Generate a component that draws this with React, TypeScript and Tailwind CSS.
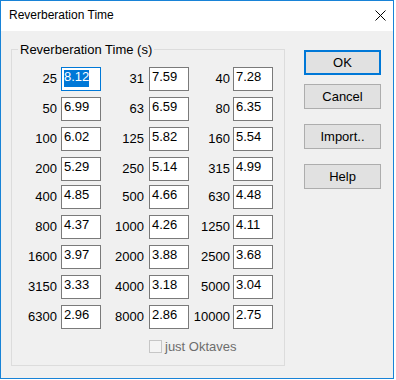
import React from 'react';

const rows: [string, string][][] = [
  [['25', '8.12'], ['31', '7.59'], ['40', '7.28']],
  [['50', '6.99'], ['63', '6.59'], ['80', '6.35']],
  [['100', '6.02'], ['125', '5.82'], ['160', '5.54']],
  [['200', '5.29'], ['250', '5.14'], ['315', '4.99']],
  [['400', '4.85'], ['500', '4.66'], ['630', '4.48']],
  [['800', '4.37'], ['1000', '4.26'], ['1250', '4.11']],
  [['1600', '3.97'], ['2000', '3.88'], ['2500', '3.68']],
  [['3150', '3.33'], ['4000', '3.18'], ['5000', '3.04']],
  [['6300', '2.96'], ['8000', '2.86'], ['10000', '2.75']],
];

// label widths and label->box gaps for the three columns
const cols = [
  { label: 'w-[45px]', gap: 'ml-[4px]' },
  { label: 'w-[43px]', gap: 'ml-[5px]' },
  { label: 'w-[41px]', gap: 'ml-[3px]' },
];

function ValueBox({ value, focused }: { value: string; focused?: boolean }) {
  return (
    <div
      className={`w-[40px] h-[24px] bg-white border flex items-start pt-[2px] pl-[2px] ${
        focused ? 'border-[#0078d7]' : 'border-[#7a7a7a]'
      }`}
    >
      <span
        className={`inline-block h-[17px] leading-[14px] ${
          focused ? 'bg-[#0078d7] text-white' : 'text-black'
        }`}
      >
        {value}
      </span>
    </div>
  );
}

function Button({ children, primary }: { children: React.ReactNode; primary?: boolean }) {
  return (
    <div
      className={`w-[77px] h-[25px] bg-[#e1e1e1] flex items-center justify-center leading-[15px] ${
        primary ? 'border-2 border-[#0078d7]' : 'border border-[#adadad]'
      }`}
    >
      {children}
    </div>
  );
}

export default function App() {
  return (
    <div
      className="w-[396px] h-[380px] bg-white text-[13px] text-black"
      style={{ fontFamily: '"Liberation Sans", Arial, sans-serif' }}
    >
      <div className="w-[394px] h-[379px] border border-[#1883d7] flex flex-col">
        {/* title bar */}
        <div className="h-[30px] bg-white flex items-start justify-between">
          <div className="pl-[8px] pt-[7px] text-[12px] leading-[15px]">Reverberation Time</div>
          <svg className="mt-[9px] mr-[7px]" width="11" height="11" viewBox="0 0 11 11">
            <path d="M0.5 0.5 L10.5 10.5 M10.5 0.5 L0.5 10.5" stroke="#000" strokeWidth="1" fill="none" />
          </svg>
        </div>

        {/* body */}
        <div className="flex-1 bg-[#f0f0f0] flex items-start pl-[10px]">
          <div className="relative mt-[18px] w-[274px] h-[317px] border border-[#dcdcdc]">
            <span className="absolute left-[6px] top-[-8px] px-[2px] bg-[#f0f0f0] leading-[15px]">
              Reverberation Time (s)
            </span>

            <div className="flex flex-col pt-[17px]">
              {rows.map((row, r) => (
                <div key={r} className={`flex items-start ${r === 0 ? '' : r === 4 ? 'mt-[4px]' : 'mt-[6px]'}`}>
                  {row.map(([freq, val], c) => (
                    <div key={freq} className="flex items-start">
                      <div className={`${cols[c].label} text-right pt-[4px] leading-[15px]`}>{freq}</div>
                      <div className={cols[c].gap}>
                        <ValueBox value={val} focused={r === 0 && c === 0} />
                      </div>
                    </div>
                  ))}
                </div>
              ))}

              <div className="flex items-start mt-[11px] pl-[137px]">
                <div className="w-[13px] h-[13px] border border-[#c6c6c6] bg-[#f4f4f4]" />
                <span className="ml-[3px] leading-[13px] text-[#6d6d6d]">just Oktaves</span>
              </div>
            </div>
          </div>

          <div className="ml-[19px] mt-[19px] flex flex-col">
            <Button primary>OK</Button>
            <div className="mt-[9px]">
              <Button>Cancel</Button>
            </div>
            <div className="mt-[15px]">
              <Button>Import..</Button>
            </div>
            <div className="mt-[15px]">
              <Button>Help</Button>
            </div>
          </div>
        </div>
      </div>
    </div>
  );
}
